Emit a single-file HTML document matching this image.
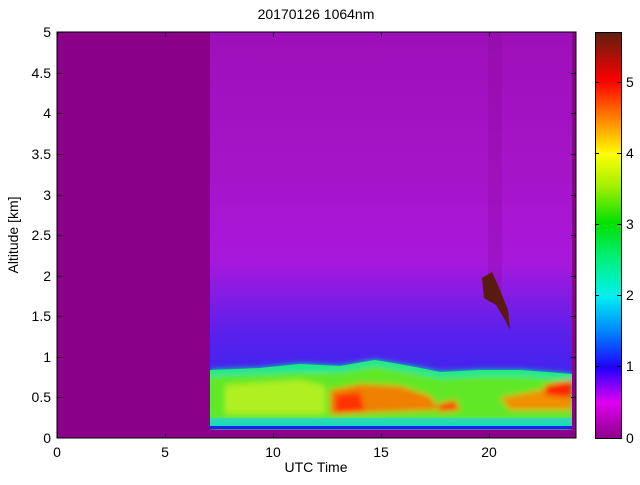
<!DOCTYPE html>
<html><head><style>
body{margin:0;background:#fff;width:640px;height:480px;overflow:hidden;font-family:"Liberation Sans",sans-serif}
</style></head><body>
<svg width="640" height="480" xmlns="http://www.w3.org/2000/svg" font-family="Liberation Sans, sans-serif" font-size="14">
<defs>
<linearGradient id="sky" x1="0" y1="0" x2="0" y2="1">
<stop offset="0" stop-color="#9c10b8"/>
<stop offset="0.35" stop-color="#a614c8"/>
<stop offset="0.58" stop-color="#a818dc"/>
<stop offset="0.76" stop-color="#5a20ec"/>
<stop offset="1" stop-color="#2228f4"/>
</linearGradient>
<linearGradient id="cb" x1="0" y1="1" x2="0" y2="0">
<stop offset="0" stop-color="#8a0088"/>
<stop offset="0.088" stop-color="#e000f0"/>
<stop offset="0.175" stop-color="#2000ff"/>
<stop offset="0.26" stop-color="#0080ff"/>
<stop offset="0.35" stop-color="#00f0f0"/>
<stop offset="0.44" stop-color="#00f080"/>
<stop offset="0.53" stop-color="#00e000"/>
<stop offset="0.62" stop-color="#a0f000"/>
<stop offset="0.70" stop-color="#ffff00"/>
<stop offset="0.79" stop-color="#ff8000"/>
<stop offset="0.88" stop-color="#ff0000"/>
<stop offset="1" stop-color="#602010"/>
</linearGradient>
<filter id="bl" filterUnits="userSpaceOnUse" x="210" y="340" width="362" height="90"><feGaussianBlur stdDeviation="3"/></filter>
</defs>
<text x="316" y="19" text-anchor="middle">20170126 1064nm</text>
<rect x="57" y="32" width="519" height="406" fill="#8a0088"/>
<rect x="210" y="32" width="362" height="396" fill="url(#sky)"/>
<rect x="488" y="32" width="14" height="270" fill="#8a0a98" opacity="0.3"/>
<path d="M210 370 L260 368 L300 364 L340 366 L375 360 L410 366 L440 372 L480 370 L520 370 L572 374 L572 428 L210 428Z" fill="#50e850"/>
<g filter="url(#bl)">
<path d="M210 370 L260 368 L300 364 L340 366 L375 360 L410 366 L440 372 L480 370 L520 370 L572 374 L572 430 L210 430Z" fill="#00e8a0"/>
<path d="M210 376 L300 372 L340 372 L375 366 L410 372 L440 378 L480 376 L520 376 L572 380 L572 420 L210 420Z" fill="#60e828"/>
<path d="M225 385 L300 380 L325 386 L325 414 L225 414Z" fill="#b0f020"/>
<path d="M330 390 L360 384 L400 386 L430 396 L440 410 L330 414Z" fill="#f08000"/>
<path d="M335 395 L360 392 L365 412 L335 414Z" fill="#ff3000"/>
<path d="M500 398 L540 390 L572 382 L572 410 L510 410Z" fill="#f09000"/>
<path d="M545 385 L572 380 L572 398 L545 395Z" fill="#ff2000"/>
<path d="M438 404 L455 400 L460 410 L440 412Z" fill="#ff4000"/>
</g>
<rect x="210" y="418" width="362" height="8" fill="#20d0d0" opacity="0.6"/>
<rect x="210" y="426" width="362" height="3" fill="#2020f0"/>
<path d="M482 278 L492 272 L500 290 L508 310 L510 330 L505 320 L496 305 L484 298Z" fill="#5a1a10"/>
<rect x="57" y="32" width="519" height="406" fill="none" stroke="#000" stroke-width="1"/>
<g stroke="#000">
<path d="M57.5 438v-5M165.5 438v-5M273.5 438v-5M381.5 438v-5M489.5 438v-5M57.5 32v5M165.5 32v5M273.5 32v5M381.5 32v5M489.5 32v5"/>
<path d="M57 357.5h5M57 276.5h5M57 195.5h5M57 113.5h5M57 32.5h5M57 397.5h5M57 316.5h5M57 235.5h5M57 154.5h5M57 73.5h5"/>
<path d="M576 357.5h-5M576 276.5h-5M576 195.5h-5M576 113.5h-5M576 397.5h-5M576 316.5h-5M576 235.5h-5M576 154.5h-5M576 73.5h-5"/>
</g>
<g text-anchor="middle">
<text x="57" y="457">0</text><text x="165" y="457">5</text><text x="273" y="457">10</text><text x="381" y="457">15</text><text x="489" y="457">20</text>
<text x="316" y="472">UTC Time</text>
</g>
<g text-anchor="end">
<text x="51" y="443">0</text><text x="51" y="402">0.5</text><text x="51" y="362">1</text><text x="51" y="321">1.5</text><text x="51" y="281">2</text><text x="51" y="240">2.5</text><text x="51" y="200">3</text><text x="51" y="159">3.5</text><text x="51" y="118">4</text><text x="51" y="78">4.5</text><text x="51" y="37">5</text>
</g>
<text transform="translate(18 235) rotate(-90)" text-anchor="middle">Altitude [km]</text>
<rect x="595.5" y="32.5" width="26" height="406" fill="url(#cb)" stroke="#000"/>
<g stroke="#000"><path d="M621 366.5h-4M621 295.5h-4M621 224.5h-4M621 153.5h-4M621 82.5h-4M595 366.5h4M595 295.5h4M595 224.5h4M595 153.5h4M595 82.5h4"/></g>
<g>
<text x="626" y="443">0</text><text x="626" y="371">1</text><text x="626" y="300">2</text><text x="626" y="229">3</text><text x="626" y="158">4</text><text x="626" y="87">5</text>
</g>
</svg>
</body></html>
